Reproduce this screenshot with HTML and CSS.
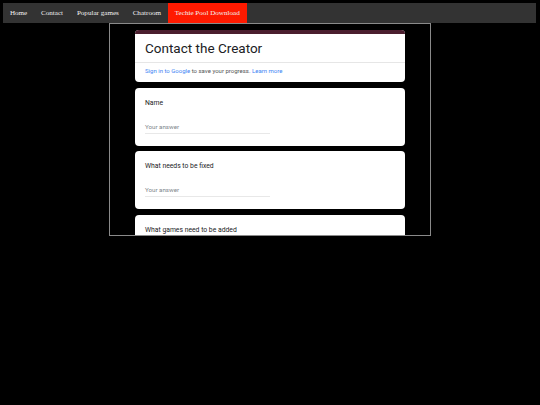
FILE: index.html
```html
<!DOCTYPE html>
<html>
<head>
<meta charset="utf-8">
<link rel="stylesheet" href="styles.css">
</head>
<body>
<ul class="nav">
  <li><a href="#">Home</a></li>
  <li><a href="#">Contact</a></li>
  <li><a href="#">Popular games</a></li>
  <li><a href="#">Chatroom</a></li>
  <li><a href="#" class="active">Techie Pool Download</a></li>
</ul>
<div class="frame-wrap">
  <div class="frame">
    <div class="form">
      <div class="card header">
        <div class="strip"></div>
        <div class="title">Contact the Creator</div>
        <div class="signin"><span class="link">Sign in to Google</span> to save your progress. <span class="link">Learn more</span></div>
      </div>
      <div class="card q">
        <div class="qtitle">Name</div>
        <div class="answer">Your answer</div>
      </div>
      <div class="card q">
        <div class="qtitle">What needs to be fixed</div>
        <div class="answer">Your answer</div>
      </div>
      <div class="card q">
        <div class="qtitle">What games need to be added</div>
        <div class="answer">Your answer</div>
      </div>
    </div>
  </div>
</div>
</body>
</html>
```
FILE: styles.css
```css
html, body {
  margin: 0;
  padding: 0;
  background: #000;
}
body {
  padding: 3px 4px 0 3px;
}
.nav {
  list-style: none;
  margin: 0;
  padding: 0;
  background: #333;
  display: flex;
  height: 20px;
}
.nav li a {
  display: block;
  padding: 0 6.9px;
  line-height: 20px;
  font-family: "Liberation Serif", serif;
  font-size: 7.1px;
  color: #f2f2f2;
  text-decoration: none;
}
.nav li a.active {
  background: #ff1a00;
}
.frame-wrap {
  display: flex;
  justify-content: flex-start;
  padding-left: 106px;
}
.frame {
  width: 320px;
  height: 211px;
  border: 1px solid #8a8a8a;
  overflow: hidden;
  background: #000;
}
.form {
  width: 270px;
  margin: 6px auto 0;
  font-family: Roboto, "Noto Sans", sans-serif;
  color: #202124;
}
.card {
  background: #fff;
  border-radius: 4px;
  margin-bottom: 5.5px;
  overflow: hidden;
}
.header {
  height: 52px;
}
.strip {
  height: 4px;
  background: #4b1e2e;
}
.title {
  font-size: 13.5px;
  line-height: 16px;
  padding: 6px 10px 0 10px;
  height: 22px;
  border-bottom: 1px solid #e6e6e6;
}
.signin {
  font-size: 6px;
  padding: 4px 10px 0;
  color: #555;
}
.link {
  color: #4285f4;
}
.q {
  height: 58px;
  padding: 0 10px;
  box-sizing: border-box;
}
.qtitle {
  font-size: 6.8px;
  padding-top: 11px;
  line-height: 8px;
}
.answer {
  margin-top: 16px;
  width: 125px;
  font-size: 6.2px;
  color: #80868b;
  padding-bottom: 2px;
  border-bottom: 1px solid #e8e8e8;
}
```
